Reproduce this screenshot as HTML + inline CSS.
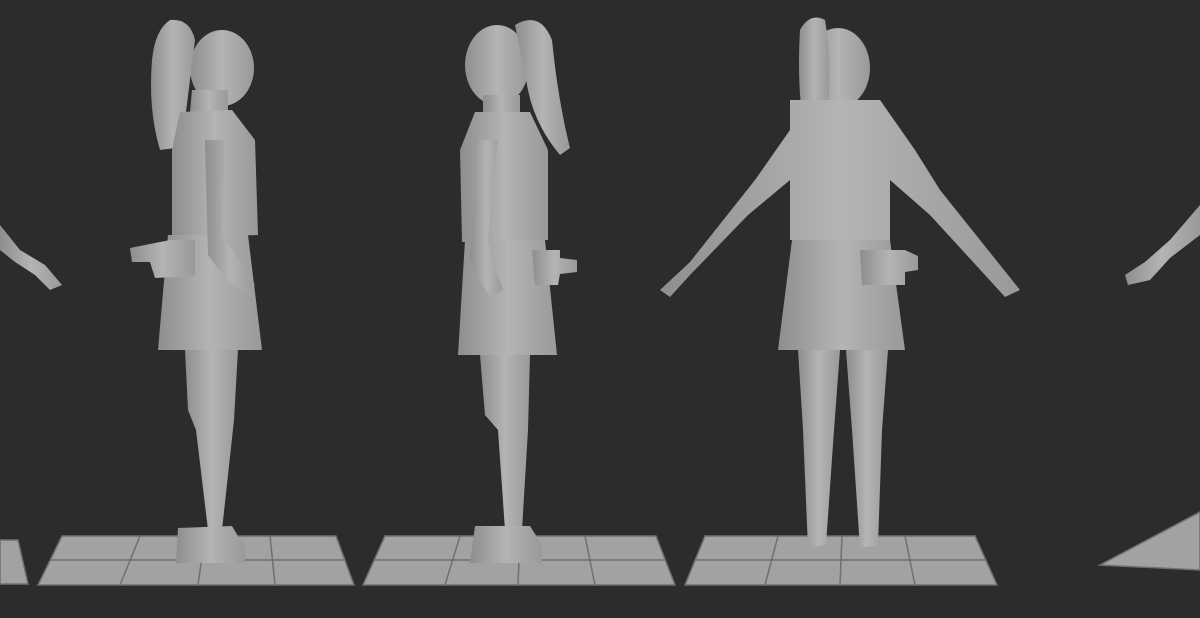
<!DOCTYPE html>
<html><head><meta charset="utf-8"><style>
html,body{margin:0;padding:0;background:#2c2c2c;width:1200px;height:618px;overflow:hidden}
svg{display:block}
</style></head><body>
<svg width="1200" height="618" viewBox="0 0 1200 618" xmlns="http://www.w3.org/2000/svg">
<rect width="1200" height="618" fill="#2c2c2c"/>
<defs>
<linearGradient id="g" x1="0" y1="0" x2="1" y2="0"><stop offset="0" stop-color="#8e8e8e"/><stop offset=".5" stop-color="#b4b4b4"/><stop offset="1" stop-color="#999"/></linearGradient>
</defs>
<g fill="#a2a2a2" stroke="#707070" stroke-width="1.5">
<polygon points="0,540 18,540 28,584 0,584"/>
<polygon points="62,536 336,536 354,585 38,585"/>
<polygon points="385,536 656,536 675,585 363,585"/>
<polygon points="705,536 975,536 997,585 685,585"/>
<polygon points="1200,512 1200,570 1100,565"/>
</g>
<g stroke="#707070" stroke-width="1.5">
<line x1="140" y1="536" x2="120" y2="585"/><line x1="205" y1="536" x2="198" y2="585"/><line x1="270" y1="536" x2="275" y2="585"/><line x1="50" y1="560" x2="345" y2="560"/>
<line x1="460" y1="536" x2="445" y2="585"/><line x1="520" y1="536" x2="518" y2="585"/><line x1="585" y1="536" x2="595" y2="585"/><line x1="374" y1="560" x2="665" y2="560"/>
<line x1="778" y1="536" x2="765" y2="585"/><line x1="842" y1="536" x2="840" y2="585"/><line x1="905" y1="536" x2="915" y2="585"/><line x1="695" y1="560" x2="985" y2="560"/>
</g>
<g fill="url(#g)">
<path d="M0,225 L20,250 L45,265 L62,285 L50,290 L35,275 L15,262 L0,250Z"/>
<!-- figure 1 -->
<ellipse cx="222" cy="68" rx="32" ry="38"/>
<path d="M170,20 Q190,18 195,40 Q190,80 185,120 L175,148 L160,150 Q148,110 152,60 Q155,30 170,20Z"/>
<path d="M192,90 L228,90 L228,112 L190,112Z"/>
<path d="M180,112 L232,110 L255,140 L258,235 L172,238 L172,150Z"/>
<path d="M168,235 L248,235 L262,350 L158,350Z"/>
<path d="M185,350 L238,350 L234,420 L222,530 L208,530 L196,430 L188,410Z"/>
<path d="M178,528 L232,526 L245,548 L245,563 L176,563Z"/>
<path d="M130,248 L170,240 L195,240 L195,276 L155,278 L150,262 L132,262Z"/>
<path d="M205,140 L225,140 L222,235 L238,258 L255,285 L242,292 L225,278 L208,255Z"/>
<!-- figure 2 -->
<ellipse cx="497" cy="65" rx="32" ry="40"/>
<path d="M515,25 Q540,10 552,40 Q558,100 570,148 L560,155 Q535,125 528,90Z"/>
<path d="M483,95 L520,95 L520,115 L483,115Z"/>
<path d="M475,112 L530,112 L548,150 L548,240 L462,242 L460,150Z"/>
<path d="M465,240 L545,240 L557,355 L458,355Z"/>
<path d="M480,355 L530,355 L528,430 L522,530 L505,530 L498,430 L485,415Z"/>
<path d="M475,526 L530,526 L542,545 L542,563 L470,563Z"/>
<path d="M532,250 L560,250 L560,258 L577,260 L577,272 L560,274 L558,285 L535,285Z"/>
<path d="M478,140 L498,140 L488,240 L492,258 L503,290 L490,297 L478,278 L470,258Z"/>
<!-- figure 3 -->
<ellipse cx="838" cy="68" rx="32" ry="40"/>
<path d="M800,30 Q810,12 825,20 Q832,60 828,110 L822,150 L808,145 Q796,100 800,30Z"/>
<path d="M790,100 L880,100 L915,150 L940,190 L1000,265 L1020,290 L1005,297 L985,275 L930,215 L890,180 L890,240 L790,240 L790,180 L748,215 L690,275 L670,297 L660,290 L690,262 L755,180 L790,130Z"/>
<path d="M792,240 L890,240 L905,350 L778,350Z"/>
<path d="M798,350 L840,350 L834,430 L826,545 L808,548 L803,430Z"/>
<path d="M846,350 L888,350 L882,430 L878,545 L860,548 L852,430Z"/>
<path d="M860,250 L905,250 L918,256 L918,270 L905,272 L905,285 L862,285Z"/>
<path d="M1200,205 L1200,235 L1170,258 L1150,280 L1128,285 L1125,275 L1145,262 L1170,240Z"/>
</g>
</svg>
</body></html>
